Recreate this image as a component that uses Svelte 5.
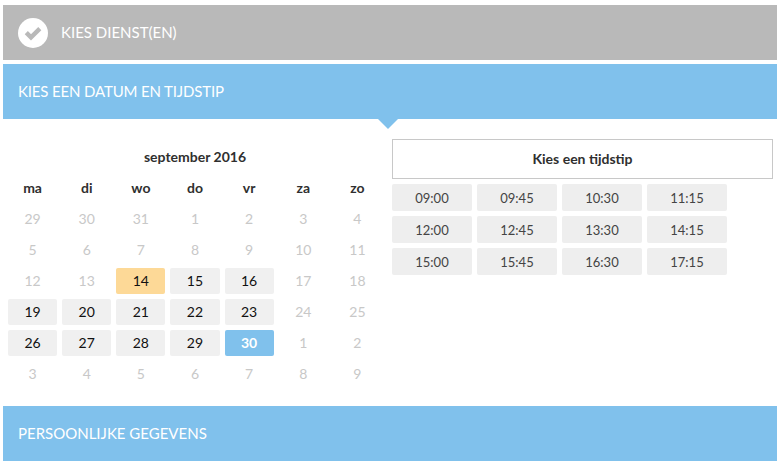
<script>
  const head = ['ma','di','wo','do','vr','za','zo'];
  const days = [
    [29,30,31,1,2,3,4],[5,6,7,8,9,10,11],[12,13,14,15,16,17,18],
    [19,20,21,22,23,24,25],[26,27,28,29,30,1,2],[3,4,5,6,7,8,9]
  ].flatMap((r, ri) => r.map((d, ci) => {
    let k = 'off';
    if (ri === 2 && ci === 2) k = 'today';
    else if (ri === 4 && ci === 4) k = 'sel';
    else if (ci < 5 && ((ri === 2 && ci > 2) || ri === 3 || ri === 4)) k = 'on';
    return { d, k };
  }));
  const times = ['09:00','09:45','10:30','11:15','12:00','12:45','13:30','14:15','15:00','15:45','16:30','17:15'];
</script>

<div class="page">
  <div class="bar done">
    <svg class="check" viewBox="0 0 30 30" width="30" height="30" aria-hidden="true">
      <circle cx="15" cy="15" r="15" fill="#fff"/>
      <path d="M8.3 14.6 L13 19.3 L21.8 10.6" fill="none" stroke="#b9b9b9" stroke-width="4.4"/>
    </svg>
    <span>KIES DIENST(EN)</span>
  </div>
  <div class="bar active">
    <span class="tight">KIES EEN DATUM EN TIJDSTIP</span>
    <i class="arrow"></i>
  </div>
  <div class="body">
    <div class="cal">
      <div class="month">september 2016</div>
      <div class="grid heads">
        {#each head as h}<div class="hd">{h}</div>{/each}
      </div>
      <div class="grid days">
        {#each days as c}<div class="day {c.k}">{c.d}</div>{/each}
      </div>
    </div>
    <div class="side">
      <div class="title">Kies een tijdstip</div>
      <div class="slots">
        {#each times as t}<div class="slot">{t}</div>{/each}
      </div>
    </div>
  </div>
  <div class="bar next"><span>PERSOONLIJKE GEGEVENS</span></div>
</div>

<style>
  :global(body) { margin: 0; background: #fff; }
  .page {
    width: 777px; height: 468px; box-sizing: border-box; padding: 5px 0 0 3px;
    font-family: Lato, "Liberation Sans", sans-serif; color: #2f2f2f; overflow: hidden;
  }
  .bar {
    height: 55px; display: flex; align-items: center; position: relative;
    color: #fff; font-size: 15px; padding-left: 15px; box-sizing: border-box;
  }
  .bar span { margin-bottom: 2px; }
  .tight { letter-spacing: -0.15px; }
  .done { background: #b9b9b9; gap: 13px; margin-bottom: 4px; }
  .active, .next { background: #80c1ec; }
  .arrow {
    position: absolute; left: 375px; bottom: -10px; width: 0; height: 0;
    border-left: 10px solid transparent; border-right: 10px solid transparent;
    border-top: 10px solid #80c1ec;
  }
  .check { flex: none; }
  .body { display: flex; height: 287px; }
  .cal { width: 374px; margin-left: 5px; padding-top: 29px; flex: none; }
  .month { text-align: center; font-weight: 700; font-size: 14px; line-height: 17px; }
  .grid { display: grid; grid-template-columns: repeat(7, 1fr); column-gap: 5px; }
  .heads { margin-top: 14px; }
  .hd { text-align: center; font-weight: 700; font-size: 14px; line-height: 17px; height: 17px; }
  .days { margin-top: 10px; row-gap: 5px; }
  .day {
    height: 26px; line-height: 26px; text-align: center; font-size: 14px; border-radius: 2px;
  }
  .off { color: #c8c8c8; }
  .on { background: #f0f0f0; color: #111; }
  .today { background: #fdd997; color: #111; }
  .sel { background: #80c1ec; color: #fff; font-weight: 700; }
  .side { margin-left: 10px; padding-top: 20px; width: 381px; flex: none; }
  .title {
    height: 40px; box-sizing: border-box; border: 1px solid #c8c8c8; text-align: center;
    font-weight: 700; font-size: 14px; line-height: 38px;
  }
  .slots { display: grid; grid-template-columns: repeat(4, 80px); gap: 5px; margin-top: 5px; }
  .slot {
    height: 27px; line-height: 28px; text-align: center; font-size: 13px; color: #444;
    background: #eee; border-radius: 2px;
  }
</style>
